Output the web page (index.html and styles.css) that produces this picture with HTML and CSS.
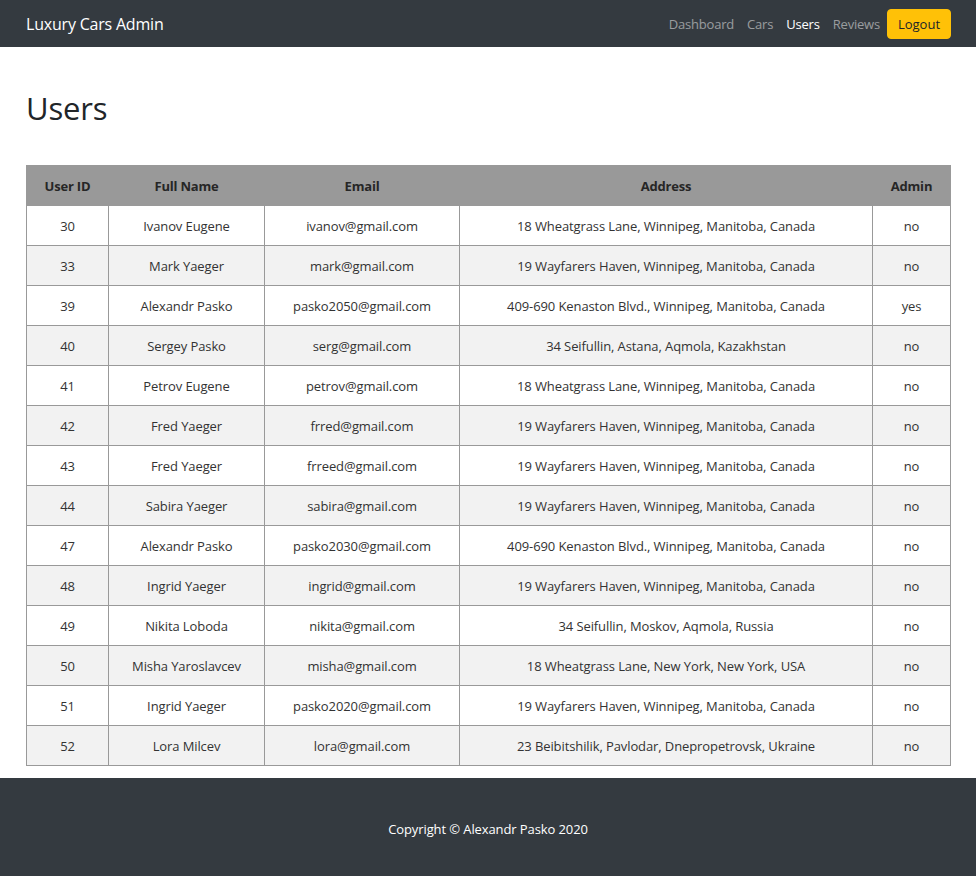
FILE: index.html
```html
<!DOCTYPE html>
<html>
<head>
<meta charset="utf-8">
<link rel="stylesheet" href="styles.css">
</head>
<body>
<nav class="navbar">
  <a class="brand" href="#">Luxury Cars Admin</a>
  <div class="nav-links">
    <a class="nav-link" href="#">Dashboard</a>
    <a class="nav-link" href="#">Cars</a>
    <a class="nav-link active" href="#">Users</a>
    <a class="nav-link" href="#">Reviews</a>
    <button class="btn-logout">Logout</button>
  </div>
</nav>
<main class="container">
  <h1 class="title">Users</h1>
  <table class="users">
    <colgroup>
      <col class="c-id"><col class="c-name"><col class="c-email"><col class="c-addr"><col class="c-admin">
    </colgroup>
    <thead>
      <tr><th>User ID</th><th>Full Name</th><th>Email</th><th>Address</th><th>Admin</th></tr>
    </thead>
    <tbody>
      <tr><td>30</td><td>Ivanov Eugene</td><td>ivanov@gmail.com</td><td>18 Wheatgrass Lane, Winnipeg, Manitoba, Canada</td><td>no</td></tr>
      <tr><td>33</td><td>Mark Yaeger</td><td>mark@gmail.com</td><td>19 Wayfarers Haven, Winnipeg, Manitoba, Canada</td><td>no</td></tr>
      <tr><td>39</td><td>Alexandr Pasko</td><td>pasko2050@gmail.com</td><td>409-690 Kenaston Blvd., Winnipeg, Manitoba, Canada</td><td>yes</td></tr>
      <tr><td>40</td><td>Sergey Pasko</td><td>serg@gmail.com</td><td>34 Seifullin, Astana, Aqmola, Kazakhstan</td><td>no</td></tr>
      <tr><td>41</td><td>Petrov Eugene</td><td>petrov@gmail.com</td><td>18 Wheatgrass Lane, Winnipeg, Manitoba, Canada</td><td>no</td></tr>
      <tr><td>42</td><td>Fred Yaeger</td><td>frred@gmail.com</td><td>19 Wayfarers Haven, Winnipeg, Manitoba, Canada</td><td>no</td></tr>
      <tr><td>43</td><td>Fred Yaeger</td><td>frreed@gmail.com</td><td>19 Wayfarers Haven, Winnipeg, Manitoba, Canada</td><td>no</td></tr>
      <tr><td>44</td><td>Sabira Yaeger</td><td>sabira@gmail.com</td><td>19 Wayfarers Haven, Winnipeg, Manitoba, Canada</td><td>no</td></tr>
      <tr><td>47</td><td>Alexandr Pasko</td><td>pasko2030@gmail.com</td><td>409-690 Kenaston Blvd., Winnipeg, Manitoba, Canada</td><td>no</td></tr>
      <tr><td>48</td><td>Ingrid Yaeger</td><td>ingrid@gmail.com</td><td>19 Wayfarers Haven, Winnipeg, Manitoba, Canada</td><td>no</td></tr>
      <tr><td>49</td><td>Nikita Loboda</td><td>nikita@gmail.com</td><td>34 Seifullin, Moskov, Aqmola, Russia</td><td>no</td></tr>
      <tr><td>50</td><td>Misha Yaroslavcev</td><td>misha@gmail.com</td><td>18 Wheatgrass Lane, New York, New York, USA</td><td>no</td></tr>
      <tr><td>51</td><td>Ingrid Yaeger</td><td>pasko2020@gmail.com</td><td>19 Wayfarers Haven, Winnipeg, Manitoba, Canada</td><td>no</td></tr>
      <tr><td>52</td><td>Lora Milcev</td><td>lora@gmail.com</td><td>23 Beibitshilik, Pavlodar, Dnepropetrovsk, Ukraine</td><td>no</td></tr>
    </tbody>
  </table>
</main>
<footer class="footer">
  <p class="copyright">Copyright © Alexandr Pasko 2020</p>
</footer>
</body>
</html>
```
FILE: styles.css
```css
* { box-sizing: border-box; }
html, body { margin: 0; padding: 0; }
body {
  font-family: "Open Sans", "Noto Sans", sans-serif;
  color: #212529;
  background: #fff;
}
.navbar {
  height: 47px;
  background: #343a40;
  display: flex;
  align-items: center;
  justify-content: space-between;
  padding: 0 25px 0 26px;
}
.brand {
  color: #fff;
  text-decoration: none;
  font-size: 16px;
  letter-spacing: -0.2px;
}
.nav-links {
  display: flex;
  align-items: center;
  gap: 13px;
}
.nav-link {
  color: rgba(255,255,255,0.5);
  text-decoration: none;
  font-size: 13px;
  letter-spacing: -0.2px;
}
.nav-link.active { color: #fff; }
.btn-logout {
  margin-left: -6px;
  background: #ffc107;
  border: 1px solid #ffc107;
  border-radius: 4px;
  color: #212529;
  font-family: inherit;
  font-size: 13px;
  height: 30px;
  width: 64px;
  padding: 0;
}
.container {
  padding: 0 26px 12px 26px;
}
.title {
  margin: 0 0 38px 0;
  padding-top: 42px;
  font-size: 31px;
  font-weight: 500;
  line-height: 38px;
  letter-spacing: -0.2px;
}
.users {
  width: 924px;
  border-collapse: collapse;
  table-layout: fixed;
  font-size: 13px;
  letter-spacing: -0.1px;
}
.c-id { width: 82px; }
.c-name { width: 156px; }
.c-email { width: 195px; }
.c-addr { width: 413px; }
.c-admin { width: 78px; }
.users th {
  background: #999999;
  height: 40px;
  font-weight: 700;
  color: #262626;
  border: 1px solid #999999;
  padding: 0;
  text-align: center;
  letter-spacing: -0.2px;
}
.users td {
  height: 40px;
  text-align: center;
  border: 1px solid #999999;
  padding: 0;
  color: #333;
}
.users tbody tr:nth-child(even) td { background: #f2f2f2; }
.footer {
  background: #343a40;
  height: 98px;
  display: flex;
  align-items: center;
  justify-content: center;
}
.copyright {
  margin: 0;
  color: #fff;
  font-size: 13px;
  letter-spacing: -0.1px;
  padding-top: 4px;
}
```
